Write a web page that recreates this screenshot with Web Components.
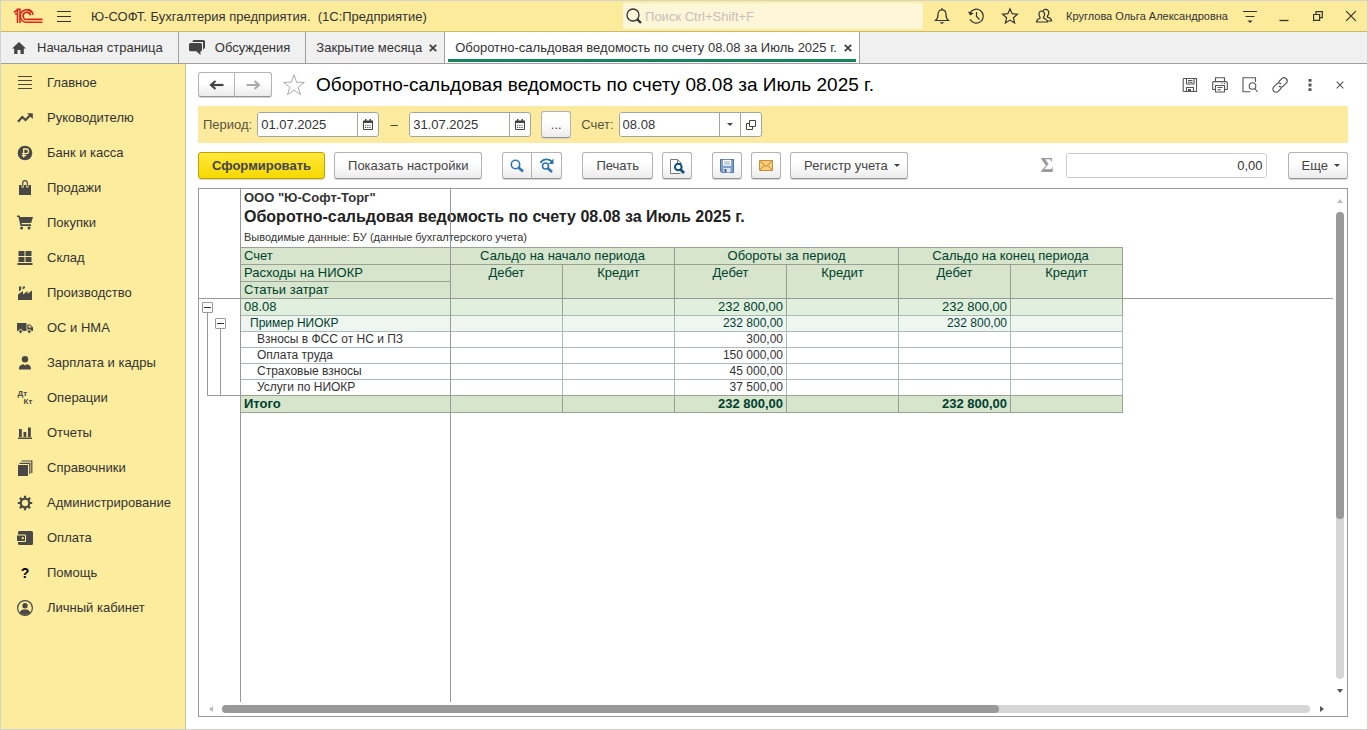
<!DOCTYPE html>
<html lang="ru">
<head>
<meta charset="utf-8">
<title>Оборотно-сальдовая ведомость по счету 08.08</title>
<style>
  html, body {
    margin: 0;
    height: 100%;
  }
  body {
    font-family: "Liberation Sans", Arial, sans-serif;
    font-size: 13px;
    color: #333;
    background: #fff;
  }
</style>
</head>
<body>
<app-window>
  <title-bar slot="title" user="Круглова Ольга Александровна">Ю-СОФТ. Бухгалтерия предприятия.&nbsp; (1С:Предприятие)</title-bar>

  <tab-strip slot="tabs">
    <tab-item icon="home">Начальная страница</tab-item>
    <tab-item icon="chat">Обсуждения</tab-item>
    <tab-item closable>Закрытие месяца</tab-item>
    <tab-item closable active>Оборотно-сальдовая ведомость по счету 08.08 за Июль 2025 г.</tab-item>
  </tab-strip>

  <side-nav slot="nav">
    <nav-item icon="lines">Главное</nav-item>
    <nav-item icon="trend">Руководителю</nav-item>
    <nav-item icon="ruble">Банк и касса</nav-item>
    <nav-item icon="bag">Продажи</nav-item>
    <nav-item icon="cart">Покупки</nav-item>
    <nav-item icon="boxes">Склад</nav-item>
    <nav-item icon="factory">Производство</nav-item>
    <nav-item icon="truck">ОС и НМА</nav-item>
    <nav-item icon="person">Зарплата и кадры</nav-item>
    <nav-item icon="dtkt">Операции</nav-item>
    <nav-item icon="bars">Отчеты</nav-item>
    <nav-item icon="books">Справочники</nav-item>
    <nav-item icon="gear">Администрирование</nav-item>
    <nav-item icon="wallet">Оплата</nav-item>
    <nav-item icon="help">Помощь</nav-item>
    <nav-item icon="account">Личный кабинет</nav-item>
  </side-nav>

  <report-form></report-form>
</app-window>

<script>
// icon = [width, height, svg body]; shapes take their colour from currentColor
const ICONS = {
  logo: [30, 16, '<g fill="none" stroke="#d8281e" stroke-width="1.6"><path d="M1 4.5 4.5 1.8V15M3.5 1.2H7V15M2 6H4"/><path d="M18.5 4.4A6.2 6.2 0 1 0 14.5 14.2H29.5"/><path d="M16.6 5.8A3.6 3.6 0 1 0 14.5 11.4H29.5"/><path d="M20 6.8A6 6 0 0 0 14.5 1.6M17.4 7.6A3 3 0 0 0 14.5 4.6"/></g>'],
  burger: [16, 14, '<path d="M1 2.5h14M1 7.5h14M1 12.5h14" stroke="currentColor" stroke-width="1.2"/>'],
  search: [16, 16, '<g fill="none" stroke="currentColor"><circle cx="7" cy="7" r="6" stroke-width="1.3"/><path d="M11.3 11.3 15 15" stroke-width="2.4"/></g>'],
  bell: [16, 18, '<path d="M1.5 13.5c2-1.6 2.5-3 2.5-6 0-3 1.6-4.7 4-4.7s4 1.7 4 4.7c0 3 .5 4.4 2.5 6zM8 1v2" fill="none" stroke="currentColor" stroke-width="1.2"/><path d="M5.5 15.2h5L8 17z" fill="currentColor"/>'],
  history: [18, 18, '<g fill="none" stroke="currentColor" stroke-width="1.2"><path d="M3 6a7 7 0 1 1 0 6.3"/><path d="M9.5 5v4.5l3 3"/></g><path d="M1 4.5 3 8.5l3.8-2.2z" fill="currentColor"/>'],
  star: [18, 18, '<path d="M9 1.8l2.1 4.9 5.3.5-4 3.5 1.2 5.2L9 13.1l-4.6 2.8 1.2-5.2-4-3.5 5.3-.5z" fill="none" stroke="currentColor" stroke-width="1.2"/>'],
  users: [18, 16, '<g fill="none" stroke="currentColor" stroke-width="1.2"><path d="M1.5 14c0-2.5 1.2-3 3.5-3.8v-1c-1.5-1.7-1.3-4.7.1-5.7 1.2-.9 3-.5 3.9.8.8 1.5.5 3.7-.5 4.9v1c2.3.8 4 1.3 4 3.8z"/><path d="M8 2.8c1-1.7 3.7-2 5-.4 1.3 1.8.7 4.2-.6 5.6v1.2c2.5.7 4.1 1.5 4.1 3.8h-4"/></g>'],
  settings: [16, 16, '<path d="M1 3.5h14M3.5 8.5h9" stroke="currentColor" stroke-width="1.2"/><path d="M5.5 12.5h5L8 15z" fill="currentColor"/>'],
  minimize: [10, 12, '<path d="M.5 10.5h9" stroke="currentColor" stroke-width="1.3"/>'],
  restore: [10, 10, '<path d="M.6 3.5h6v5.9h-6zM3 3.5V.7h6.3v6H6.6" fill="none" stroke="currentColor" stroke-width="1.2"/>'],
  cross: [12, 12, '<path d="M1.2 1.2 10.8 10.8M10.8 1.2 1.2 10.8" stroke="currentColor" stroke-width="1.2"/>'],
  'cross-small': [8, 8, '<path d="M.7.7l6.6 6.6M7.3.7.7 7.3" stroke="currentColor" stroke-width="1.1"/>'],
  'cross-bold': [8, 8, '<path d="M.8.8l6.4 6.4M7.2.8.8 7.2" stroke="currentColor" stroke-width="1.9"/>'],
  home: [14, 12, '<path d="M7 0 14 6.5h-2.2V12H8.500V8h-3v4H2.2V6.500H0z" fill="currentColor"/>'],
  chat: [16, 15, '<path d="M4.500 0h10A1.500 1.500 0 0 1 16 1.500V8l-2 1.500V2H3.500V1z" fill="currentColor"/><path d="M1.500 3h10A1.500 1.500 0 0 1 13 4.500v5.300a1.500 1.500 0 0 1-1.500 1.500V15l-4.200-3.700H1.500A1.500 1.500 0 0 1 0 9.800V4.500A1.500 1.500 0 0 1 1.500 3z" fill="currentColor"/>'],
  lines: [16, 14, '<path d="M1 .5h14M1 4.5h14M1 8.5h14M1 12.5h14" stroke="currentColor"/>'],
  trend: [16, 10, '<path d="M1 8.8 5.3 4l3.2 3L13 2.5" fill="none" stroke="currentColor" stroke-width="2.2"/><path d="M10 .3h5.8V6z" fill="currentColor"/>'],
  ruble: [16, 16, '<circle cx="8" cy="8" r="7.3" fill="currentColor"/><path d="M6.7 12.5V4h2.5a2.3 2.3 0 0 1 0 4.6H4.8M4.8 10.6h4.4" fill="none" stroke="#fcec9d" stroke-width="1.3"/>'],
  bag: [14, 16, '<path d="M1 5h12v10H1z" fill="currentColor"/><path d="M4.7 7.5V3.3a2.3 2.3 0 0 1 4.6 0v4.2" fill="none" stroke="#fcec9d" stroke-width="2.4"/><path d="M4.7 6.5V3a2.3 2.3 0 0 1 4.6 0v3.5" fill="none" stroke="currentColor" stroke-width="1.2"/>'],
  cart: [16, 15, '<path d="M0 .4h2.6l.6 1.6H16l-1.8 6H4.5l.3 1.3H14v1.6H3.5L1.5 2H0z" fill="currentColor"/><circle cx="4.6" cy="13" r="1.5" fill="currentColor"/><circle cx="12" cy="13" r="1.5" fill="currentColor"/>'],
  boxes: [16, 14, '<path d="M1.5 0h6v5h-6zM8.5 0h6v5h-6zM1.5 6h6v5h-6zM8.5 6h6v5h-6zM.5 12h15v2H.5z" fill="currentColor"/>'],
  factory: [16, 14, '<path d="M1 14V8.5L6 5v3.5L10.5 5v2.8L15 4.500V14z" fill="currentColor"/><path d="M2 .5h2.2v3L2 5.500zM5.700.5H8V2L5.700 3.500z" fill="currentColor"/>'],
  truck: [16, 12, '<path d="M0 1h9.500v8H0zM10.300 2.500h3L16 5.500V9h-5.700z" fill="currentColor"/><path d="M11.500 3.600h1.600l1.500 2h-3.100z" fill="#fcec9d"/><g fill="currentColor" stroke="#fcec9d"><circle cx="3.6" cy="9.5" r="1.9"/><circle cx="12.3" cy="9.5" r="1.9"/></g>'],
  person: [14, 14, '<circle cx="7" cy="3.3" r="3.2" fill="currentColor"/><path d="M1 13.500c0-4 1.500-4.700 4.500-5.300L7 9.500l1.500-1.300c3 .6 4.500 1.300 4.500 5.300z" fill="currentColor"/>'],
  bars: [14, 12, '<path d="M1 2h2.8v8H1zM5.500 5h2.800v5H5.500zM10 .5h2.800V10H10zM0 10.500h14V12H0z" fill="currentColor"/>'],
  books: [16, 16, '<path d="M1 5h10v11H1z" fill="currentColor"/><path d="M2.5 3.3h10.3V14M4.5 1h10.3v12" fill="none" stroke="currentColor" stroke-width="1.2"/>'],
  gear: [16, 16, '<circle cx="8" cy="8" r="4.3" fill="none" stroke="currentColor" stroke-width="2.2"/><path d="M8 .8v3M8 12.2v3M.8 8h3M12.2 8h3M2.9 2.9l2 2M11.1 11.1l2 2M2.9 13.1l2-2M11.1 4.9l2-2" stroke="currentColor" stroke-width="2.2"/>'],
  wallet: [16, 14, '<path d="M2.500 0h12A1.500 1.500 0 0 1 16 1.500v11a1.500 1.500 0 0 1-1.500 1.500h-12A1.500 1.500 0 0 1 1 12.500V1.500A1.500 1.500 0 0 1 2.500 0z" fill="currentColor"/><path d="M0 4h8.500v6.500H0" fill="currentColor" stroke="#fcec9d"/><circle cx="5.8" cy="7.2" r="1.1" fill="#fcec9d"/>'],
  account: [16, 16, '<circle cx="8" cy="8" r="7.4" fill="none" stroke="currentColor" stroke-width="1.2"/><circle cx="8" cy="5.8" r="2.7" fill="currentColor"/><path d="M2.8 12.5C3.5 10 5.5 9.6 8 9.6s4.5.4 5.2 2.9A7 7 0 0 1 8 15a7 7 0 0 1-5.2-2.5z" fill="currentColor"/>'],
  back: [16, 10, '<path d="M2 5h12.5" stroke="currentColor" stroke-width="2.2"/><path d="M6.5 1 2 5l4.5 4" fill="none" stroke="currentColor" stroke-width="2.2"/>'],
  forward: [16, 10, '<path d="M1.5 5H14" stroke="currentColor" stroke-width="2"/><path d="M9.5 1 14 5 9.5 9" fill="none" stroke="currentColor" stroke-width="2"/>'],
  favorite: [24, 24, '<path d="M12 1.8l2.6 7.4 7.8.2-6.2 4.8 2.3 7.5L12 17.2l-6.5 4.5 2.3-7.5L1.600 9.400l7.800-.2z" fill="#fff" stroke="#aaa"/>'],
  disk: [16, 16, '<g fill="none" stroke="currentColor" stroke-width="1.1"><path d="M2 1.500h12.500v13H2a.8.8 0 0 1-.8-.8V2.300a.8.8 0 0 1 .8-.8z"/><path d="M4.500 1.500V7H12V1.500M6 3.500h4.500M6 5.200h4.500M4.500 14.500v-4h7v4"/></g><path d="M6 12h3v2H6z" fill="currentColor"/>'],
  printer: [16, 16, '<g fill="none" stroke="currentColor" stroke-width="1.1"><path d="M3.5 4.500V.8h9v3.700M3 12.500H.7V5.800a1.200 1.200 0 0 1 1.200-1.200h12.200a1.200 1.200 0 0 1 1.200 1.200v6.700H13"/><path d="M3.5 8.5h9V15h-9zM5.5 10.5h5M5.5 12.7H9M9.5 6.5h1M12 6.5h1"/></g>'],
  preview: [16, 16, '<g fill="none" stroke="currentColor" stroke-width="1.1"><path d="M13.5 5V.8H1v14h7.5"/><circle cx="10.5" cy="9" r="3.3"/><path d="M12.8 11.5 15.5 15"/></g>'],
  link: [16, 16, '<g fill="none" stroke="currentColor" stroke-width="1.2" stroke-linecap="round"><path d="M7 4.5 9.8 1.7a3 3 0 0 1 4.4 4.4l-3 3a3 3 0 0 1-4 .2"/><path d="M9 11.5l-2.8 2.8A3 3 0 0 1 1.8 9.9l3-3a3 3 0 0 1 4-.2"/></g>'],
  dots: [4, 12, '<path d="M.5 0h3v2.8h-3zM.5 4.6h3v2.8h-3zM.5 9.2h3V12h-3z" fill="currentColor"/>'],
  calendar: [10, 11, '<path d="M.5 2.5h9v8h-9z" fill="none" stroke="currentColor"/><path d="M0 1.5h10V4H0zM2 0h1.5v2H2zM6.5 0H8v2H6.5z" fill="currentColor"/><path d="M2 6.3h6M2 8.5h6" stroke="currentColor" stroke-dasharray="1.2 1"/>'],
  caret: [6, 3, '<path d="M0 0h6L3 3z" fill="currentColor"/>'],
  open: [10, 10, '<path d="M3.5.5h6v6h-6z" fill="none" stroke="currentColor"/><path d="M3.5 3.5h-3v6h6v-3" fill="none" stroke="currentColor"/>'],
  find: [14, 14, '<circle cx="5.5" cy="5.5" r="4.2" fill="none" stroke="#2d74b2" stroke-width="1.6"/><path d="M8.500 8.500l4.500 4" stroke="#2d74b2" stroke-width="2.6"/>'],
  'find-next': [16, 15, '<circle cx="6.5" cy="8" r="3" fill="none" stroke="#2d74b2" stroke-width="1.6"/><path d="M8.500 10l4.500 4" stroke="#2d74b2" stroke-width="2.4"/><path d="M1.500 5C3.500.5 9.500.3 13 3.500" fill="none" stroke="#2d74b2" stroke-width="1.8"/><path d="M14.500.5V6h-5z" fill="#2d74b2"/>'],
  'page-find': [16, 16, '<path d="M11.5 15.5h-10v-14h7l4 4" fill="#fff" stroke="#777"/><path d="M8.5 1.5v4h4" fill="none" stroke="#777"/><circle cx="9.3" cy="9" r="3.3" fill="#fff" stroke="#0d4f7c" stroke-width="2"/><path d="M11.5 11.5 15 15" stroke="#0d4f7c" stroke-width="2.6"/>'],
  'disk-color': [14, 14, '<path d="M.5.5h13v13H1.800L.5 12.200z" fill="#7da0cd" stroke="#4f6f9c"/><path d="M3 .8h8v6H3z" fill="#fff"/><path d="M4 3h6M4 5h6" stroke="#86a3c8"/><path d="M3.500 9h7v4.500h-7z" fill="#dbe5f1"/><path d="M4.500 10h2v3.500h-2z" fill="#3f5d88"/>'],
  mail: [14, 11, '<path d="M.5.5h13v10H.5z" fill="#fbcf74" stroke="#c78c3c"/><path d="M.8 1 7 6.500 13.200 1M1 10l4.200-4.500M13 10 8.800 5.500" fill="none" stroke="#b98239"/>'],
  'arrow-up': [6, 4, '<path d="M0 4h6L3 0z" fill="currentColor"/>'],
  'arrow-down': [6, 4, '<path d="M0 0h6L3 4z" fill="currentColor"/>'],
  'arrow-left': [4, 6, '<path d="M4 0v6L0 3z" fill="currentColor"/>'],
  'arrow-right': [4, 6, '<path d="M0 0v6l4-3z" fill="currentColor"/>']
};

// Attaches an open shadow root with the element's styles and markup
class BaseElement extends HTMLElement {
  constructor() {
    super();
    this.attachShadow({mode: "open"});
  }

  connectedCallback() {
    this.shadowRoot.innerHTML = "<style>" + this.styles() + "</style>" + this.markup();
  }

  styles() { return ""; }
  markup() { return "<slot></slot>"; }
}

class UiIcon extends BaseElement {
  styles() {
    return `
      :host { display: inline-flex; flex: none; align-items: center; justify-content: center; }
      svg { display: block; }
      .dtkt { display: grid; font: bold 8px/8px "Liberation Sans", Arial, sans-serif; }
      .dtkt span:last-child { padding-left: 6px; }
      .help { font: bold 14px/16px "Liberation Sans", Arial, sans-serif; color: #000; }
    `;
  }

  markup() {
    var name = this.getAttribute("name");
    // these two are lettering, not drawings
    if (name == "dtkt") {
      return '<span class="dtkt"><span>Дт</span><span>Кт</span></span>';
    }
    if (name == "help") {
      return '<span class="help">?</span>';
    }
    var icon = ICONS[name];
    return `<svg width="${icon[0]}" height="${icon[1]}" viewBox="0 0 ${icon[0]} ${icon[1]}" aria-hidden="true">${icon[2]}</svg>`;
  }
}
customElements.define("ui-icon", UiIcon);

class AppWindow extends BaseElement {
  styles() {
    return `
      :host {
        display: flex;
        flex-direction: column;
        box-sizing: border-box;
        min-height: 100%;
        border: 1px solid #d4d4cf;
      }
      .body { display: flex; flex: 1; }
      main { display: flex; flex: 1; min-width: 0; }
    `;
  }

  markup() {
    return `
      <slot name="title"></slot>
      <slot name="tabs"></slot>
      <div class="body">
        <slot name="nav"></slot>
        <main><slot></slot></main>
      </div>
    `;
  }
}
customElements.define("app-window", AppWindow);

// Flat icon button without a frame
class IconButton extends BaseElement {
  styles() {
    return `
      :host { display: flex; width: 34px; height: 30px; }
      button {
        display: flex;
        flex: 1;
        align-items: center;
        justify-content: center;
        padding: 0;
        border: 0;
        background: none;
        color: inherit;
      }
    `;
  }

  markup() {
    return `<button type="button" aria-label="${this.getAttribute("label")}"><ui-icon name="${this.getAttribute("icon")}"></ui-icon></button>`;
  }
}
customElements.define("icon-button", IconButton);

class TitleBar extends BaseElement {
  styles() {
    return `
      :host {
        display: flex;
        align-items: center;
        height: 30px;
        border-bottom: 1px solid #cdb96a;
        background: #fceb9b;
      }
      .logo { width: 30px; margin-left: 12px; }
      .burger { width: 42px; }
      .caption { padding-left: 6px; white-space: nowrap; }
      .search {
        display: flex;
        align-items: center;
        flex: 0 1 300px;
        height: 26px;
        margin-left: auto;
        margin-right: 2px;
        background: #fef6d9;
      }
      .search ui-icon { width: 22px; }
      .search input {
        flex: 1;
        min-width: 0;
        padding: 0;
        border: 0;
        outline: 0;
        background: none;
        font: inherit;
      }
      .search input::placeholder { color: #c6c0b8; opacity: 1; }
      .user { padding: 0 5px; font-size: 11px; white-space: nowrap; }
      .last { width: 32px; }
    `;
  }

  markup() {
    return `
      <ui-icon class="logo" name="logo"></ui-icon>
      <icon-button class="burger" icon="burger" label="Меню"></icon-button>
      <span class="caption"><slot></slot></span>
      <div class="search">
        <ui-icon name="search"></ui-icon>
        <input type="text" placeholder="Поиск Ctrl+Shift+F" aria-label="Поиск">
      </div>
      <icon-button icon="bell" label="Оповещения"></icon-button>
      <icon-button icon="history" label="История"></icon-button>
      <icon-button icon="star" label="Избранное"></icon-button>
      <icon-button icon="users" label="Пользователи"></icon-button>
      <span class="user">${this.getAttribute("user")}</span>
      <icon-button icon="settings" label="Сервис"></icon-button>
      <icon-button icon="minimize" label="Свернуть"></icon-button>
      <icon-button icon="restore" label="Восстановить"></icon-button>
      <icon-button class="last" icon="cross" label="Закрыть"></icon-button>
    `;
  }
}
customElements.define("title-bar", TitleBar);

class TabStrip extends BaseElement {
  styles() {
    return `
      :host {
        display: flex;
        height: 31px;
        border-bottom: 1px solid #a0a0a0;
        background: #f0f0f0;
      }
    `;
  }
}
customElements.define("tab-strip", TabStrip);

class TabItem extends BaseElement {
  styles() {
    return `
      :host { display: flex; border-right: 1px solid #a0a0a0; }
      :host([active]) {
        background: linear-gradient(#14855a, #14855a) 3px 27px / calc(100% - 6px) 3px no-repeat #fff;
      }
      a {
        display: flex;
        align-items: center;
        padding-left: 10px;
        padding-right: 15px;
        color: inherit;
        text-decoration: none;
        white-space: nowrap;
      }
      a ui-icon { width: 16px; margin-right: 10px; color: #444; }
      :host([closable]) a { padding-right: 0; }
      button {
        display: flex;
        align-items: center;
        justify-content: center;
        width: 22px;
        padding: 0;
        border: 0;
        background: none;
        color: #444;
      }
    `;
  }

  markup() {
    var icon = this.getAttribute("icon");
    var html = '<a href="#">' + (icon ? `<ui-icon name="${icon}"></ui-icon>` : "") + "<slot></slot></a>";
    if (this.hasAttribute("closable")) {
      html += '<button type="button" aria-label="Закрыть вкладку"><ui-icon name="cross-bold"></ui-icon></button>';
    }
    return html;
  }
}
customElements.define("tab-item", TabItem);

class SideNav extends BaseElement {
  styles() {
    return `
      :host {
        flex: none;
        box-sizing: border-box;
        width: 185px;
        padding-top: 1px;
        border-right: 1px solid #c9c39b;
        background: #fcec9d;
      }
      nav { display: flex; flex-direction: column; }
    `;
  }

  markup() {
    return '<nav aria-label="Разделы"><slot></slot></nav>';
  }
}
customElements.define("side-nav", SideNav);

class NavItem extends BaseElement {
  styles() {
    return `
      :host { display: block; }
      a {
        display: flex;
        align-items: center;
        gap: 14px;
        height: 35px;
        padding-left: 16px;
        color: inherit;
        text-decoration: none;
        white-space: nowrap;
      }
      ui-icon { width: 16px; color: #4a4845; }
    `;
  }

  markup() {
    return `<a href="#"><ui-icon name="${this.getAttribute("icon")}"></ui-icon><span><slot></slot></span></a>`;
  }
}
customElements.define("nav-item", NavItem);

class ToolButton extends BaseElement {
  styles() {
    return `
      :host { display: flex; flex: none; height: 27px; }
      button {
        display: flex;
        align-items: center;
        justify-content: center;
        gap: 6px;
        box-sizing: border-box;
        min-width: 30px;
        padding: 0 13px;
        border: 1px solid #b3b3b3;
        border-bottom-color: #949494;
        border-radius: 3px;
        background: linear-gradient(#fff 40%, #ececec);
        box-shadow: 0 1px 0 #d5d5d5;
        font: inherit;
        color: #444;
        white-space: nowrap;
      }
      :host([icon]) button, :host([compact]) button { padding: 0; }
      :host([menu]) button { padding-right: 7px; }
      :host([primary]) button {
        border-color: #bfa200;
        background: linear-gradient(#ffe83a, #f7d900);
        font-weight: bold;
      }
      :host([join="left"]) button { border-radius: 3px 0 0 3px; }
      :host([join="right"]) button { border-left: 0; border-radius: 0 3px 3px 0; }
      :host([wide]) button { width: 37px; }
      :host([disabled]) button { color: #aaa; }
    `;
  }

  markup() {
    var icon = this.getAttribute("icon");
    var label = this.getAttribute("label");
    return `
      <button type="button" ${label ? `aria-label="${label}"` : ""} ${this.hasAttribute("disabled") ? "disabled" : ""}>
        ${icon ? `<ui-icon name="${icon}"></ui-icon>` : "<span><slot></slot></span>"}
        ${this.hasAttribute("menu") ? '<ui-icon name="caret"></ui-icon>' : ""}
      </button>
    `;
  }
}
customElements.define("tool-button", ToolButton);

// Labelled text box; "actions" lists the icons of the buttons at its right end
class TextField extends BaseElement {
  styles() {
    return `
      :host { display: flex; align-items: center; gap: 5px; }
      label { color: #595440; white-space: nowrap; }
      .box {
        display: flex;
        box-sizing: border-box;
        height: 25px;
        border: 1px solid #a5a59b;
        border-radius: 3px;
        background: #fff;
        overflow: hidden;
      }
      input {
        box-sizing: border-box;
        width: 99px;
        padding: 0 3px;
        border: 0;
        outline: 0;
        font: inherit;
        color: #333;
      }
      button {
        display: flex;
        align-items: center;
        justify-content: center;
        box-sizing: border-box;
        width: 21px;
        padding: 0;
        border: 0;
        border-left: 1px solid #a5a59b;
        background: none;
        color: #444;
      }
      :host([total]) { gap: 12px; }
      :host([total]) label {
        font: bold 20px/25px "Liberation Serif", serif;
        color: #999;
      }
      :host([total]) .box { border-color: #ccc; }
      :host([total]) input { width: 199px; text-align: right; }
    `;
  }

  markup() {
    var actions = (this.getAttribute("actions") || "").split(" ").filter(Boolean);
    var label = this.getAttribute("label");
    return `
      ${label ? `<label for="value">${label}</label>` : ""}
      <div class="box">
        <input id="value" type="text" value="${this.getAttribute("value")}" ${label ? "" : `aria-label="${this.getAttribute("hint")}"`}>
        ${actions.map(icon => `<button type="button" aria-label="Выбрать"><ui-icon name="${icon}"></ui-icon></button>`).join("")}
      </div>
    `;
  }
}
customElements.define("text-field", TextField);

class ScrollRail extends BaseElement {
  styles() {
    return `
      :host { display: flex; align-items: center; }
      :host([vertical]) { flex-direction: column; }
      button {
        display: flex;
        flex: none;
        align-items: center;
        justify-content: center;
        width: 23px;
        height: 14px;
        padding: 0;
        border: 0;
        background: none;
        color: #555;
      }
      button:disabled { color: #bbb; }
      .track { flex: 1; height: 8px; border-radius: 4px; background: #d6d6d6; }
      .thumb { width: 71.4%; height: 100%; border-radius: 4px; background: #999; }
      :host([vertical]) button { width: 14px; height: 23px; }
      :host([vertical]) .track { width: 8px; }
      :host([vertical]) .thumb { width: 100%; height: 65.7%; }
    `;
  }

  markup() {
    var vertical = this.hasAttribute("vertical");
    return `
      <button type="button" aria-label="Назад" disabled><ui-icon name="${vertical ? "arrow-up" : "arrow-left"}"></ui-icon></button>
      <div class="track"><div class="thumb"></div></div>
      <button type="button" aria-label="Вперед"><ui-icon name="${vertical ? "arrow-down" : "arrow-right"}"></ui-icon></button>
    `;
  }
}
customElements.define("scroll-rail", ScrollRail);

// Expand/collapse marks of the row groups, nested by level
class OutlineTree extends BaseElement {
  styles() {
    return `
      :host { display: flex; box-sizing: border-box; height: 97px; padding: 3px 0 0 3px; }
      .group { display: flex; flex: 1; flex-direction: column; }
      .stem {
        display: flex;
        flex: 1;
        margin-left: 5px;
        border-left: 1px solid #999;
        border-bottom: 1px solid #999;
      }
      .stem .group { padding: 5px 0 0 7px; }
      .stem .stem { border-bottom: 0; }
      button {
        display: flex;
        align-items: center;
        justify-content: center;
        box-sizing: border-box;
        width: 11px;
        height: 11px;
        padding: 0;
        border: 1px solid #999;
        border-radius: 1px;
        background: #fff;
      }
      button::before { content: ""; width: 7px; height: 1px; background: #333; }
    `;
  }

  markup() {
    return `
      <div class="group">
        <button type="button" aria-label="Свернуть 08.08"></button>
        <div class="stem">
          <div class="group">
            <button type="button" aria-label="Свернуть Пример НИОКР"></button>
            <div class="stem"></div>
          </div>
        </div>
      </div>
    `;
  }
}
customElements.define("outline-tree", OutlineTree);

const ROWS = [
  {kind: "account", name: "08.08", values: ["", "", "232 800,00", "", "232 800,00", ""]},
  {kind: "project", name: "Пример НИОКР", values: ["", "", "232 800,00", "", "232 800,00", ""]},
  {kind: "item", name: "Взносы в ФСС от НС и ПЗ", values: ["", "", "300,00", "", "", ""]},
  {kind: "item", name: "Оплата труда", values: ["", "", "150 000,00", "", "", ""]},
  {kind: "item", name: "Страховые взносы", values: ["", "", "45 000,00", "", "", ""]},
  {kind: "item", name: "Услуги по НИОКР", values: ["", "", "37 500,00", "", "", ""]},
  {kind: "total", name: "Итого", values: ["", "", "232 800,00", "", "232 800,00", ""]}
];

class ReportTable extends BaseElement {
  styles() {
    return `
      :host { display: block; }
      table {
        width: 882px;
        table-layout: fixed;
        border-spacing: 0;
        color: #00402f;
        line-height: 16px;
      }
      col:first-child { width: 210px; }
      th, td {
        box-sizing: border-box;
        height: 17px;
        padding: 0 3px;
        border: 0 solid #98a193;
        border-width: 0 1px 1px 0;
        font-weight: normal;
        text-align: right;
        vertical-align: top;
        white-space: nowrap;
      }
      th { text-align: left; }
      thead th { background: #d6e5cb; }
      thead th:not(.side) { text-align: center; }
      thead tr:first-child th { height: 18px; border-top-width: 1px; }
      .account > * { background: #e1f0dc; border-bottom-color: #a9bdb6; }
      .project > * { background: #eff6f1; }
      .project > *, .item > * {
        height: 16px;
        border-color: #a9bdb6;
        font-size: 12px;
        line-height: 15px;
      }
      .item > * { background: #fff; color: #333; }
      .item:nth-last-child(2) > * { border-bottom-color: #98a193; }
      tbody th { border-right-color: #98a193; }
      .project th { padding-left: 9px; }
      .item th { padding-left: 16px; }
      .total > * { background: #d6e5cb; font-weight: bold; }
    `;
  }

  markup() {
    var pair = '<th rowspan="2" scope="col">Дебет</th><th rowspan="2" scope="col">Кредит</th>';
    return `
      <table>
        <colgroup><col><col span="6"></colgroup>
        <thead>
          <tr>
            <th class="side" scope="col">Счет</th>
            <th colspan="2" scope="colgroup">Сальдо на начало периода</th>
            <th colspan="2" scope="colgroup">Обороты за период</th>
            <th colspan="2" scope="colgroup">Сальдо на конец периода</th>
          </tr>
          <tr><th class="side" scope="col">Расходы на НИОКР</th>${pair + pair + pair}</tr>
          <tr><th class="side" scope="col">Статьи затрат</th></tr>
        </thead>
        <tbody>
          ${ROWS.map(row => `
            <tr class="${row.kind}">
              <th scope="row">${row.name}</th>
              ${row.values.map(value => `<td>${value}</td>`).join("")}
            </tr>
          `).join("")}
        </tbody>
      </table>
    `;
  }
}
customElements.define("report-table", ReportTable);

class ReportSheet extends BaseElement {
  styles() {
    return `
      :host {
        display: grid;
        flex: 1;
        grid-template-columns: minmax(0, 1fr) 14px;
        grid-template-rows: 1fr 14px;
        border: 1px solid #999;
      }
      .view {
        display: grid;
        grid-template-columns: 42px 210px minmax(0, 1fr);
        grid-template-rows: 110px 1fr;
        overflow: hidden;
      }
      .content { grid-area: 1 / 2 / -1 / -1; }
      outline-tree { grid-area: 2 / 1; }
      /* lines of the frozen rows and columns */
      .freeze { border: 0 solid #999; pointer-events: none; }
      .freeze.outline { grid-area: 1 / 1 / -1 / 2; border-right-width: 1px; }
      .freeze.side { grid-area: 1 / 2 / -1 / 3; border-right-width: 1px; }
      .freeze.head { grid-area: 1 / 1 / 2 / -1; border-bottom-width: 1px; }
      header { height: 58px; padding-left: 3px; white-space: nowrap; }
      p, h2 { margin: 0; }
      .org { font-weight: bold; line-height: 17px; }
      h2 { font-size: 16px; line-height: 22px; color: #222; }
      .note { font-size: 11px; line-height: 19px; }
    `;
  }

  markup() {
    return `
      <div class="view">
        <div class="content">
          <header>
            <p class="org">ООО "Ю-Софт-Торг"</p>
            <h2>Оборотно-сальдовая ведомость по счету 08.08 за Июль 2025 г.</h2>
            <p class="note">Выводимые данные: БУ (данные бухгалтерского учета)</p>
          </header>
          <report-table></report-table>
        </div>
        <outline-tree></outline-tree>
        <div class="freeze outline"></div>
        <div class="freeze side"></div>
        <div class="freeze head"></div>
      </div>
      <scroll-rail vertical></scroll-rail>
      <scroll-rail></scroll-rail>
    `;
  }
}
customElements.define("report-sheet", ReportSheet);

class ReportForm extends BaseElement {
  styles() {
    return `
      :host {
        display: flex;
        flex: 1;
        flex-direction: column;
        gap: 9px;
        min-width: 0;
        padding: 8px 19px 12px 12px;
        background: #fff;
      }
      .row { display: flex; align-items: center; }
      .heading { height: 25px; }
      .heading tool-button { height: 25px; }
      .heading ui-icon { margin: 0 10px; }
      h1 { margin: 0; font-size: 19px; font-weight: normal; color: #000; white-space: nowrap; }
      .tools { display: flex; gap: 14px; margin-left: auto; color: #555; }
      .tools icon-button { width: 16px; height: 25px; }
      .filter { height: 37px; padding-left: 5px; background: #fceb9e; }
      .dash { width: 30px; text-align: center; }
      .filter tool-button { margin: 0 10px; }
      .commands { gap: 9px; }
      .pair { display: flex; }
      .section { margin-left: 11px; }
      .commands text-field { margin-left: auto; margin-right: 12px; }
    `;
  }

  markup() {
    return `
      <div class="row heading">
        <tool-button icon="back" join="left" wide label="Назад"></tool-button>
        <tool-button icon="forward" join="right" wide disabled label="Вперед"></tool-button>
        <ui-icon name="favorite"></ui-icon>
        <h1>Оборотно-сальдовая ведомость по счету 08.08 за Июль 2025 г.</h1>
        <div class="tools">
          <icon-button icon="disk" label="Сохранить"></icon-button>
          <icon-button icon="printer" label="Печать"></icon-button>
          <icon-button icon="preview" label="Просмотр"></icon-button>
          <icon-button icon="link" label="Ссылка"></icon-button>
          <icon-button icon="dots" label="Еще"></icon-button>
          <icon-button icon="cross-small" label="Закрыть"></icon-button>
        </div>
      </div>
      <div class="row filter">
        <text-field label="Период:" value="01.07.2025" actions="calendar"></text-field>
        <span class="dash">–</span>
        <text-field hint="Конец периода" value="31.07.2025" actions="calendar"></text-field>
        <tool-button compact>...</tool-button>
        <text-field label="Счет:" value="08.08" actions="caret open"></text-field>
      </div>
      <div class="row commands">
        <tool-button primary>Сформировать</tool-button>
        <tool-button>Показать настройки</tool-button>
        <div class="pair section">
          <tool-button icon="find" join="left" label="Найти"></tool-button>
          <tool-button icon="find-next" join="right" label="Найти далее"></tool-button>
        </div>
        <tool-button class="section">Печать</tool-button>
        <tool-button icon="page-find" label="Предварительный просмотр"></tool-button>
        <tool-button class="section" icon="disk-color" label="Сохранить"></tool-button>
        <tool-button icon="mail" label="Отправить"></tool-button>
        <tool-button menu>Регистр учета</tool-button>
        <text-field total label="Σ" value="0,00"></text-field>
        <tool-button menu>Еще</tool-button>
      </div>
      <report-sheet></report-sheet>
    `;
  }
}
customElements.define("report-form", ReportForm);
</script>
</body>
</html>
